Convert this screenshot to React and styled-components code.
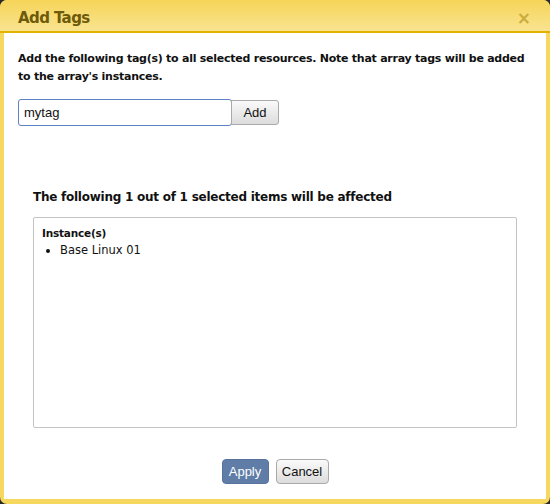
import React, { useState } from 'react';
import styled, { createGlobalStyle } from 'styled-components';

const Global = createGlobalStyle`
  html, body { margin: 0; padding: 0; background: #2a2a2a; }
  body { font-family: "DejaVu Sans", "Liberation Sans", sans-serif; }
`;

const Dialog = styled.div`
  width: 550px;
  height: 504px;
  box-sizing: border-box;
  background: #f7d85e;
  border-radius: 7px;
  padding: 0 4px 5px 4px;
  display: flex;
  flex-direction: column;
`;

const TitleBar = styled.div`
  height: 33px;
  margin: 0 -4px;
  padding: 5px 18px 0;
  box-sizing: border-box;
  border-radius: 7px 7px 0 0;
  border-bottom: 2px solid #e1b300;
  background: linear-gradient(#f6d558, #f9e390);
  display: flex;
  align-items: center;
  justify-content: space-between;
`;

const Title = styled.span`
  font-family: "DejaVu Sans", sans-serif;
  font-size: 15px;
  font-weight: bold;
  letter-spacing: -0.6px;
  color: #6d5a0c;
`;

const Close = styled.span`
  font-family: "DejaVu Sans", sans-serif;
  font-size: 17px;
  font-weight: bold;
  color: #c9ac3e;
  margin-right: 1px;
`;

const Body = styled.div`
  flex: 1;
  background: #fff;
  padding: 17px 14px 0 14px;
  display: flex;
  flex-direction: column;
`;

const Intro = styled.p`
  margin: 0;
  font-size: 11px;
  font-weight: bold;
  letter-spacing: -0.25px;
  line-height: 18px;
  color: #111;
`;

const TagRow = styled.div`
  display: flex;
  margin-top: 13px;
  align-items: center;
`;

const TagInput = styled.input`
  width: 214px;
  height: 27px;
  box-sizing: border-box;
  border: 1px solid #5b83c4;
  border-radius: 3px;
  padding: 0 5px;
  font-family: "Liberation Sans", sans-serif;
  font-size: 13px;
  color: #111;
  outline: none;
`;

const Button = styled.button`
  height: 25px;
  width: ${p => p.$w}px;
  margin: 0;
  box-sizing: border-box;
  padding: 0;
  font-family: "Liberation Sans", sans-serif;
  font-size: 13px;
  border-radius: ${p => p.$joined ? '0 3px 3px 0' : '4px'};
  border: 1px solid ${p => p.$primary ? '#57749c' : '#a9a9a9'};
  color: ${p => p.$primary ? '#fff' : '#111'};
  background: ${p => p.$primary ? '#5f7da7' : 'linear-gradient(#fafafa, #dcdcdc)'};
  ${p => p.$joined && 'margin-left: -1px;'}
`;

const Affected = styled.div`
  margin: 64px 15px 0;
  display: flex;
  flex-direction: column;
`;

const AffectedTitle = styled.h3`
  margin: 0;
  font-size: 12px;
  letter-spacing: -0.25px;
  line-height: 15px;
  font-weight: bold;
  color: #111;
`;

const ItemBox = styled.div`
  margin-top: 12px;
  height: 211px;
  box-sizing: border-box;
  border: 1px solid #c4c4c4;
  border-radius: 2px;
  padding: 9px 8px;
`;

const GroupLabel = styled.div`
  font-size: 10.5px;
  font-weight: bold;
  letter-spacing: -0.2px;
  line-height: 13px;
  color: #111;
`;

const ItemList = styled.ul`
  margin: 2px 0 0 0;
  padding-left: 18px;
  font-size: 11.5px;
  color: #111;
  li { line-height: 16px; }
`;

const Footer = styled.div`
  display: flex;
  justify-content: center;
  gap: 7px;
  margin-top: 31px;
`;

export default function App() {
  const [tag, setTag] = useState('mytag');
  return (
    <>
      <Global />
      <Dialog>
        <TitleBar>
          <Title>Add Tags</Title>
          <Close>×</Close>
        </TitleBar>
        <Body>
          <Intro>
            Add the following tag(s) to all selected resources. Note that array tags will be added
            to the array's instances.
          </Intro>
          <TagRow>
            <TagInput value={tag} onChange={e => setTag(e.target.value)} />
            <Button $joined $w={48}>Add</Button>
          </TagRow>
          <Affected>
            <AffectedTitle>The following 1 out of 1 selected items will be affected</AffectedTitle>
            <ItemBox>
              <GroupLabel>Instance(s)</GroupLabel>
              <ItemList>
                <li>Base Linux 01</li>
              </ItemList>
            </ItemBox>
          </Affected>
          <Footer>
            <Button $primary $w={47}>Apply</Button>
            <Button $w={53}>Cancel</Button>
          </Footer>
        </Body>
      </Dialog>
    </>
  );
}
